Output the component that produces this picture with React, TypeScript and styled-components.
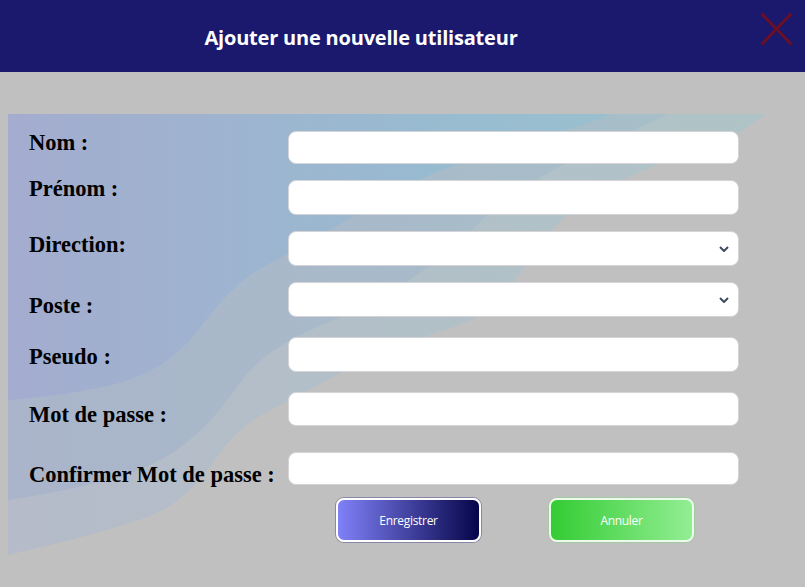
import React from "react";
import styled, { createGlobalStyle } from "styled-components";

const GlobalStyle = createGlobalStyle`
  html, body {
    margin: 0;
    padding: 0;
    background: #c0c0c0;
  }
  body {
    width: 805px;
    height: 587px;
    overflow: hidden;
    font-family: "Open Sans", "Noto Sans", sans-serif;
  }
  * { box-sizing: border-box; }
`;

const Page = styled.div`
  width: 805px;
  height: 587px;
  background: #c0c0c0;
  display: flex;
  flex-direction: column;
`;

const Header = styled.header`
  height: 72px;
  flex-shrink: 0;
  background: #1a196e;
  display: grid;
  grid-template-columns: 722px 1fr;
  align-items: start;
`;

const Title = styled.h1`
  margin: 28px 0 0;
  justify-self: center;
  font-family: "Open Sans", "Noto Sans", sans-serif;
  font-weight: 700;
  font-size: 20px;
  line-height: 20px;
  color: #ffffff;
  letter-spacing: -0.2px;
  white-space: nowrap;
`;

const CloseButton = styled.button`
  margin: 12px 0 0 38px;
  width: 33px;
  height: 34px;
  padding: 0;
  border: 0;
  background: none;
  cursor: pointer;
  display: block;
`;

const Card = styled.section`
  position: relative;
  margin: 42px 0 0 8px;
  width: 759px;
  height: 441px;
`;

const Backdrop = styled.svg`
  position: absolute;
  inset: 0;
  z-index: 0;
`;

const Form = styled.form`
  position: relative;
  z-index: 1;
  padding: 17px 0 0 21px;
  display: flex;
  flex-direction: column;
`;

const Row = styled.div<{ $gap: number; $h: number }>`
  display: flex;
  align-items: flex-start;
  margin-top: ${(p) => p.$gap}px;
  height: ${(p) => p.$h}px;
`;

const Label = styled.label<{ $offset: number }>`
  flex-shrink: 0;
  width: 259px;
  margin-top: ${(p) => p.$offset}px;
  font-family: "Liberation Serif", "Times New Roman", serif;
  font-weight: 700;
  font-size: 22.5px;
  line-height: 22.5px;
  color: #000000;
  white-space: nowrap;
`;

const fieldBase = `
  width: 451px;
  height: 100%;
  border: 1px solid #d4d4d8;
  border-radius: 8px;
  background: #ffffff;
  outline: none;
  font-family: "Open Sans", sans-serif;
  font-size: 14px;
  padding: 0 10px;
`;

const TextInput = styled.input`
  ${fieldBase}
`;

const SelectWrap = styled.div`
  position: relative;
  width: 451px;
  height: 100%;
`;

const Select = styled.select`
  ${fieldBase}
  appearance: none;
  -webkit-appearance: none;
`;

const Chevron = styled.svg`
  position: absolute;
  right: 10px;
  top: 50%;
  margin-top: -3px;
  pointer-events: none;
`;

const ButtonRow = styled.div`
  display: flex;
  gap: 68px;
  margin-top: 13px;
  padding-left: 307px;
`;

const ActionButton = styled.button<{ $variant: "save" | "cancel" }>`
  width: 145px;
  height: 44px;
  border-radius: 8px;
  border: 2px solid ${(p) => (p.$variant === "save" ? "#ffffff" : "#eef9ee")};
  box-shadow: 0 0 0 1px
    ${(p) => (p.$variant === "save" ? "rgba(90, 90, 150, 0.55)" : "rgba(140, 210, 140, 0.6)")};
  background: ${(p) =>
    p.$variant === "save"
      ? "linear-gradient(to right, #8080f8, #05054a)"
      : "linear-gradient(to right, #33cc33, #93ee93)"};
  color: #ffffff;
  font-family: "Open Sans", sans-serif;
  font-size: 12px;
  letter-spacing: -0.3px;
  cursor: pointer;
`;

type Field = {
  label: string;
  h: number;
  gap: number;
  offset: number;
  kind: "text" | "password" | "select";
};

const fields: Field[] = [
  { label: "Nom :", h: 33, gap: 0, offset: 0.7, kind: "text" },
  { label: "Prénom :", h: 35, gap: 16, offset: -2.3, kind: "text" },
  { label: "Direction:", h: 35, gap: 16, offset: 3.3, kind: "select" },
  { label: "Poste :", h: 35, gap: 16, offset: 13.3, kind: "select" },
  { label: "Pseudo :", h: 35, gap: 20, offset: 9, kind: "text" },
  { label: "Mot de passe :", h: 34, gap: 20, offset: 12.3, kind: "password" },
  { label: "Confirmer Mot de passe :", h: 33, gap: 26, offset: 12, kind: "password" },
];

const WaveBackdrop = () => (
  <Backdrop width="759" height="441" viewBox="0 0 759 441" aria-hidden="true">
    <defs>
      <linearGradient id="gOuter" x1="0" y1="0" x2="1" y2="0">
        <stop offset="0" stopColor="#b5bbc9" />
        <stop offset="1" stopColor="#afc4c7" />
      </linearGradient>
      <linearGradient id="gMid" x1="0" y1="0" x2="1" y2="0">
        <stop offset="0" stopColor="#aab4ca" />
        <stop offset="1" stopColor="#a7bfc9" />
      </linearGradient>
      <linearGradient id="gBlue" x1="0" y1="0" x2="605" y2="0" gradientUnits="userSpaceOnUse">
        <stop offset="0" stopColor="#a4accf" />
        <stop offset="0.7" stopColor="#98bbd0" />
        <stop offset="1" stopColor="#9ac0cf" />
      </linearGradient>
    </defs>
    <path
      fill="url(#gOuter)"
      d="M0 0 L759 0 L732 18 C690 35 600 65 560 100 C525 130 505 185 465 205 C430 222 380 228 330 260 C280 290 240 300 215 335 C190 370 170 395 125 408 C80 422 40 432 0 441 Z"
    />
    <path
      fill="url(#gMid)"
      d="M0 0 L660 0 C600 30 520 60 470 110 C430 150 380 185 325 206 C280 225 255 240 235 265 C210 300 180 340 120 360 C80 372 40 380 0 386 Z"
    />
    <path
      fill="url(#gBlue)"
      d="M0 0 L605 0 C540 25 470 40 420 62 C360 90 320 120 270 145 C230 165 215 185 195 210 C170 245 140 262 100 272 C60 280 30 284 0 286 Z"
    />
  </Backdrop>
);

export default function App() {
  return (
    <>
      <GlobalStyle />
      <Page>
        <Header>
          <Title>Ajouter une nouvelle utilisateur</Title>
          <CloseButton type="button" aria-label="Fermer">
            <svg width="33" height="34" viewBox="0 0 33 34">
              <path d="M1.5 1.5 L31.5 32.5 M31.5 1.5 L1.5 32.5" stroke="#6a0f25" strokeWidth="3" fill="none" />
            </svg>
          </CloseButton>
        </Header>
        <Card>
          <WaveBackdrop />
          <Form onSubmit={(e) => e.preventDefault()}>
            {fields.map((f, i) => (
              <Row key={f.label} $gap={f.gap} $h={f.h}>
                <Label $offset={f.offset} htmlFor={`field-${i}`}>
                  {f.label}
                </Label>
                {f.kind === "select" ? (
                  <SelectWrap>
                    <Select id={`field-${i}`} defaultValue="">
                      <option value=""></option>
                    </Select>
                    <Chevron width="10" height="6" viewBox="0 0 10 6">
                      <path d="M1 1 L5 5 L9 1" stroke="#3e4a5e" strokeWidth="2" fill="none" />
                    </Chevron>
                  </SelectWrap>
                ) : (
                  <TextInput id={`field-${i}`} type={f.kind} />
                )}
              </Row>
            ))}
            <ButtonRow>
              <ActionButton type="submit" $variant="save">
                Enregistrer
              </ActionButton>
              <ActionButton type="button" $variant="cancel">
                Annuler
              </ActionButton>
            </ButtonRow>
          </Form>
        </Card>
      </Page>
    </>
  );
}
